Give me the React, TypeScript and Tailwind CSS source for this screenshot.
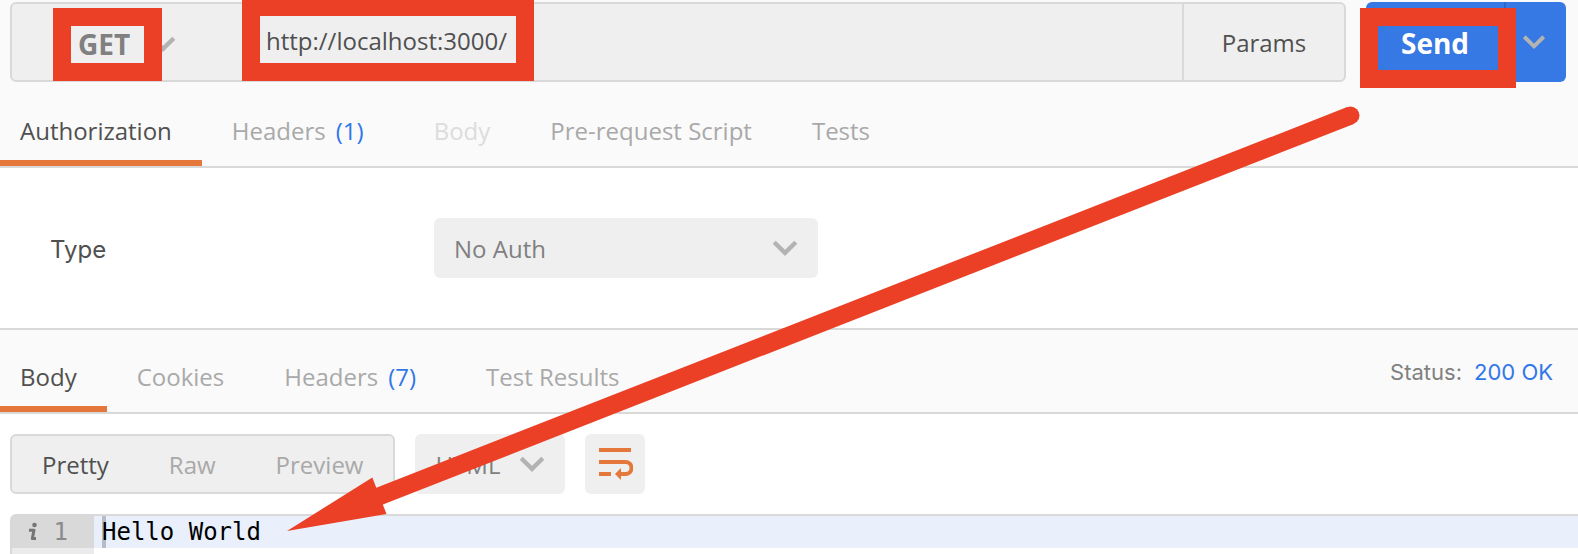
import React from 'react';

type Tab = { label: string; count?: number; active?: boolean; disabled?: boolean };

const requestTabs: Tab[] = [
  { label: 'Authorization', active: true },
  { label: 'Headers', count: 1 },
  { label: 'Body', disabled: true },
  { label: 'Pre-request Script' },
  { label: 'Tests' },
];

const responseTabs: Tab[] = [
  { label: 'Body', active: true },
  { label: 'Cookies' },
  { label: 'Headers', count: 7 },
  { label: 'Test Results' },
];

function Chevron({ className = '' }: { className?: string }) {
  return (
    <svg viewBox="0 0 26 16" className={`pointer-events-none h-4 w-[26px] ${className}`} fill="none" aria-hidden="true">
      <path d="M2.2 2.2 L13 12.8 L23.8 2.2" stroke="#b3b3b3" strokeWidth="4.4" />
    </svg>
  );
}

function WrapIcon() {
  return (
    <svg viewBox="0 0 36 34" className="h-[34px] w-9" fill="none" aria-hidden="true">
      <path d="M2 3H34M2 15H28.5A5.8 5.8 0 0 1 28.5 27H23M2 27H14" stroke="#e4773a" strokeWidth="4" />
      <path d="M18 27L24 21V33Z" fill="#e4773a" />
    </svg>
  );
}

function TabList({ tabs, label }: { tabs: Tab[]; label: string }) {
  return (
    <div role="tablist" aria-label={label} className="flex items-stretch">
      {tabs.map((tab, i) => (
        <button
          key={tab.label}
          role="tab"
          aria-selected={!!tab.active}
          disabled={tab.disabled}
          className={`flex items-center gap-2.5 whitespace-nowrap border-b-6 pt-3 ${i === 0 ? 'pl-5' : 'pl-[30px]'} ${
            tab.count !== undefined ? 'pr-10' : 'pr-[30px]'
          } ${
            tab.active
              ? 'border-[#e4773a] text-[#505050]'
              : tab.disabled
                ? 'border-transparent text-[#dcdcdc]'
                : 'border-transparent text-[#a9a9a9]'
          }`}
        >
          {tab.label}
          {tab.count !== undefined && <span className="text-[#3277e8]">({tab.count})</span>}
        </button>
      ))}
    </div>
  );
}

function Highlight({ className }: { className: string }) {
  return <span aria-hidden="true" className={`pointer-events-none absolute z-10 border-18 border-[#eb4026] ${className}`} />;
}

export default function App() {
  return (
    <main className="relative flex min-h-screen flex-col overflow-hidden bg-white font-['Open_Sans',sans-serif] text-2xl leading-8 text-[#505050]">
      <form className="flex bg-[#fafafa] pl-2.5 pr-3 pt-0.5" onSubmit={(e) => e.preventDefault()}>
        <div className="flex h-20 min-w-0 flex-1 rounded-md border-2 border-[#d9d9d9] bg-[#efefef]">
          <div className="relative flex w-[230px] shrink-0 items-center">
            <select
              aria-label="Request method"
              defaultValue="GET"
              className="h-full w-full appearance-none bg-transparent pl-[66px] pt-1 text-[28px] font-bold text-[#808080] outline-none"
            >
              <option>GET</option>
            </select>
            <Chevron className="absolute left-[138px] top-8" />
            <Highlight className="left-[41px] top-1 h-[73px] w-[109px]" />
          </div>
          <div className="relative min-w-0 flex-1">
            <input
              aria-label="Request URL"
              defaultValue="http://localhost:3000/"
              className="h-full w-full bg-transparent pb-1 pl-6 outline-none"
            />
            <Highlight className="-top-1.5 left-0 h-[83px] w-[292px]" />
          </div>
          <button type="button" className="w-[162px] border-l-2 border-[#d9d9d9] pt-0.5">
            Params
          </button>
        </div>
        <div className="relative ml-5 flex h-20 w-[200px] shrink-0 rounded-md bg-[#3678e4] text-white">
          <button type="submit" className="w-[138px] pt-0.5 text-[28px] font-bold">
            Send
          </button>
          <button type="button" aria-label="Send options" className="flex flex-1 items-center justify-center border-l-2 border-[#2d68c8] pr-1">
            <Chevron className="scale-90" />
          </button>
          <Highlight className="-left-1.5 top-1.5 h-20 w-[156px]" />
        </div>
      </form>

      <div className="flex h-[86px] border-b-2 border-[#d9d9d9] bg-[#fafafa] pt-2">
        <TabList tabs={requestTabs} label="Request" />
      </div>

      <section className="flex h-40 items-center pl-[50px]">
        <label htmlFor="auth-type" className="w-96 pt-1 font-['Inter',sans-serif] text-2xl leading-8">
          Type
        </label>
        <div className="relative flex items-center">
          <select
            id="auth-type"
            defaultValue="No Auth"
            className="h-[60px] w-96 appearance-none rounded-md bg-[#efefef] pl-5 pt-0.5 text-[#808080] outline-none"
          >
            <option>No Auth</option>
          </select>
          <Chevron className="absolute right-5" />
        </div>
      </section>

      <div className="flex h-[86px] justify-between border-y-2 border-[#d9d9d9] bg-[#fafafa] pt-1.5">
        <TabList tabs={responseTabs} label="Response" />
        <p className="flex items-center gap-3 pb-1 pr-[25px] font-['Inter',sans-serif] text-[22px] text-[#808080]">
          Status: <span className="text-[#3277e8]">200 OK</span>
        </p>
      </div>

      <div className="flex gap-5 px-2.5 py-5">
        <div className="flex h-[60px] gap-[60px] rounded-md border-2 border-[#d9d9d9] bg-[#efefef] px-[30px] pt-0.5 text-[#a9a9a9]">
          <button className="text-[#505050]">Pretty</button>
          <button>Raw</button>
          <button>Preview</button>
        </div>
        <div className="relative flex items-center">
          <select
            aria-label="Response format"
            defaultValue="HTML"
            className="h-[60px] w-[150px] appearance-none rounded-md bg-[#efefef] pl-5 pt-0.5 text-[#808080] outline-none"
          >
            <option>HTML</option>
          </select>
          <Chevron className="absolute right-5" />
        </div>
        <button aria-label="Wrap lines" className="flex size-[60px] items-center justify-center rounded-md bg-[#efefef]">
          <WrapIcon />
        </button>
      </div>

      <div className="ml-2.5 flex flex-1 rounded-tl-md border-l-2 border-t-2 border-[#d9d9d9] font-['DejaVu_Sans_Mono',monospace]">
        <div className="w-[82px] bg-[#ebebeb]">
          <div className="flex h-8 items-center justify-between bg-[#d9d9d9] pl-4 pr-[26px] text-[#8a8a8a]">
            <svg viewBox="0 0 10 20" className="h-5 w-2.5" aria-hidden="true">
              <circle cx="6.5" cy="3" r="2.3" fill="#757575" />
              <path d="M1 8.3H6L4.3 16.6H8" fill="none" stroke="#757575" strokeWidth="3" strokeLinejoin="round" />
            </svg>
            <span>1</span>
          </div>
        </div>
        <div className="flex-1">
          <div className="flex h-8 items-center bg-[#e9f0fc] pl-2 text-black">
            <span className="-mr-1 h-8 w-1 bg-[#b6bdc9]" />
            <code className="relative font-['DejaVu_Sans_Mono',monospace]">Hello World</code>
          </div>
        </div>
      </div>

      <svg viewBox="0 0 1578 554" className="pointer-events-none absolute left-0 top-0 z-20 w-full" aria-hidden="true">
        <path d="M372 499.1L1350.5 115.5" stroke="#eb4026" strokeWidth="18" />
        <circle cx="1350.5" cy="115.5" r="9" fill="#eb4026" />
        <path d="M287 531L372.3 477.5L386.5 514Z" fill="#eb4026" />
      </svg>
    </main>
  );
}
